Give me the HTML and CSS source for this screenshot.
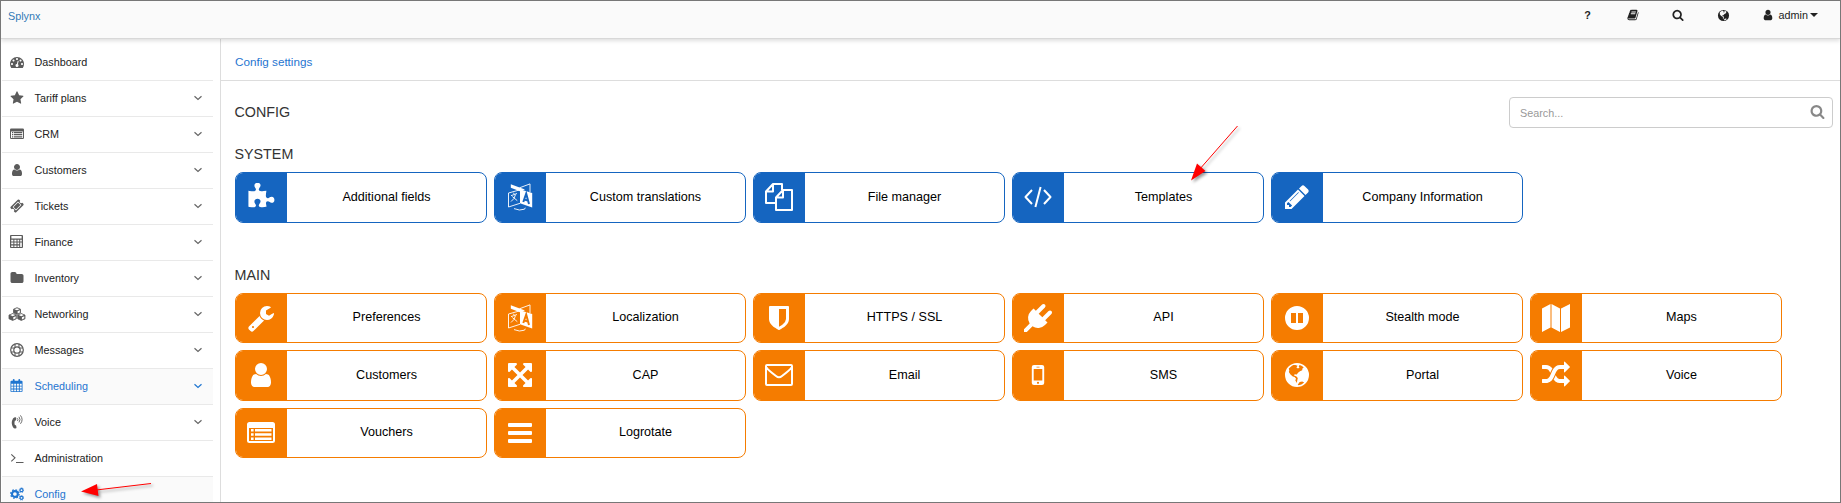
FILE: index.html
```html
<!DOCTYPE html>
<html lang="en">
<head>
<meta charset="utf-8">
<title>Splynx</title>
<link rel="stylesheet" href="styles.css">
</head>
<body>
<svg class="sprite" aria-hidden="true">
<symbol id="search" viewBox="0 0 1792 1792"><path d="M1216 832q0-185-131.500-316.500t-316.500-131.500-316.500 131.500-131.500 316.500 131.500 316.500 316.500 131.500 316.500-131.500 131.500-316.500zm512 832q0 52-38 90t-90 38q-54 0-90-38l-343-342q-179 124-399 124-143 0-273.500-55.500t-225-150-150-225-55.500-273.500 55.500-273.500 150-225 225-150 273.500-55.500 273.500 55.500 225 150 150 225 55.500 273.500q0 220-124 399l343 343q37 37 37 90z"/></symbol>
<symbol id="user" viewBox="0 0 1792 1792"><path d="M1536 1399q0 109-62.500 187t-150.500 78h-854q-88 0-150.500-78t-62.500-187q0-85 8.500-160.500t31.500-152 58.500-131 94-89 134.500-34.500q131 128 313 128t313-128q76 0 134.500 34.500t94 89 58.500 131 31.500 152 8.500 160.500zm-256-887q0 159-112.500 271.500t-271.500 112.500-271.500-112.500-112.500-271.500 112.500-271.500 271.500-112.500 271.500 112.500 112.500 271.500z"/></symbol>
<symbol id="star" viewBox="0 0 1792 1792"><path d="M1728 647q0 22-26 48l-363 354 86 500q1 7 1 20 0 21-10.500 35.500t-30.500 14.500q-19 0-40-12l-449-236-449 236q-22 12-40 12-21 0-31.500-14.500t-10.500-35.500q0-6 2-20l86-500-364-354q-25-27-25-48 0-37 56-46l502-73 225-455q19-41 49-41t49 41l225 455 502 73q56 9 56 46z"/></symbol>
<symbol id="gauge" viewBox="0 0 1792 1792"><path d="M384 1152q0-53-37.500-90.500t-90.500-37.500-90.500 37.500-37.500 90.500 37.500 90.500 90.500 37.500 90.500-37.500 37.500-90.500zm192-448q0-53-37.500-90.500t-90.500-37.500-90.500 37.500-37.500 90.500 37.500 90.500 90.500 37.500 90.500-37.500 37.500-90.500zm428 481l101-382q6-26-7.500-48.500t-38.500-29.500-48 6.500-30 39.500l-101 382q-60 5-107 43.500t-63 98.500q-20 77 20 146t117 89 146-20 89-117q16-60-6-117t-72-91zm660-33q0-53-37.500-90.500t-90.500-37.500-90.500 37.500-37.500 90.500 37.500 90.500 90.500 37.500 90.500-37.500 37.500-90.500zm-640-640q0-53-37.500-90.500t-90.500-37.500-90.500 37.500-37.500 90.500 37.500 90.500 90.500 37.500 90.500-37.500 37.500-90.500zm448 192q0-53-37.500-90.500t-90.500-37.500-90.500 37.500-37.500 90.500 37.500 90.500 90.500 37.500 90.500-37.500 37.500-90.500zm320 448q0 261-141 483-19 29-54 29h-1402q-35 0-54-29-141-221-141-483 0-182 71-348t191-286 286-191 348-71 348 71 286 191 191 286 71 348z"/></symbol>
<symbol id="list" viewBox="0 0 28 28"><path fill-rule="evenodd" d="M2.500 3h23A2.500 2.500 0 0 1 28 5.500v16a2.500 2.500 0 0 1-2.500 2.500h-23A2.500 2.500 0 0 1 0 21.500v-16A2.500 2.500 0 0 1 2.500 3zM2 9v13h24V9zM4 10h2.600v2.500H4zM8 10h16.500v2.500H8zM4 14.200h2.600v2.500H4zM8 14.200h16.500v2.500H8zM4 18.400h2.600v2.500H4zM8 18.400h16.500v2.500H8z"/></symbol>
<symbol id="ticket" viewBox="0 0 1792 1792"><path d="M1024 452l316 316-572 572-316-316zm-211 979l618-618q19-19 19-45t-19-45l-362-362q-18-18-45-18t-45 18l-618 618q-19 19-19 45t19 45l362 362q18 18 45 18t45-18zm889-637l-907 908q-37 37-90.500 37t-90.500-37l-126-126q56-56 56-136t-56-136-136-56-136 56l-125-126q-37-37-37-90.500t37-90.500l907-906q37-37 90.500-37t90.500 37l125 125q-56 56-56 136t56 136 136 56 136-56l126 125q37 37 37 90.500t-37 90.500z"/></symbol>
<symbol id="calc" viewBox="0 0 14 14"><path fill-rule="evenodd" d="M1 0h12q1 0 1 1v12q0 1-1 1H1q-1 0-1-1V1q0-1 1-1zM1.500 1.200v2.600h11V1.200zM1.300 5.200v1.800h2.300V5.200zM4.700 5.200v1.800H7V5.200zM8.100 5.200v1.800h1.800V5.200zM11 5.200v1.800h1.700V5.200zM1.300 8.200V10h2.300V8.200zM4.700 8.200V10H7V8.200zM8.100 8.200V10h1.800V8.200zM1.300 11.200v1.600h2.300v-1.600zM4.700 11.200v1.600H7v-1.600zM8.100 11.200v1.600h1.800v-1.600zM11 8.200v4.600h1.700V8.200z"/></symbol>
<symbol id="folder" viewBox="0 0 1792 1792"><path d="M1728 608v704q0 92-66 158t-158 66h-1216q-92 0-158-66t-66-158v-960q0-92 66-158t158-66h320q92 0 158 66t66 158v32h672q92 0 158 66t66 158z"/></symbol>
<symbol id="cubes" viewBox="0 0 18 14"><path stroke="currentColor" stroke-width=".8" stroke-linejoin="round" d="M9 .7l3.500 1.500v3.600L9 7.400 5.500 5.800V2.200zM4.700 6.600l3.600 1.500v3.700l-3.600 1.600-3.700-1.600V8.100zM13.300 6.600L17 8.100v3.700l-3.700 1.600-3.600-1.600V8.100z"/><path fill="#fff" d="M9 1.200l2.600 1L9 3.300l-2.600-1zM4.700 7.100l2.600 1-2.600 1.100-2.600-1.100zM13.300 7.100l2.600 1-2.600 1.100-2.600-1.100zM9.600 4.300l2.300-1v2.100l-2.300 1.100zM5.300 10.200l2.400-1v2.100l-2.400 1.200zM13.900 10.200l2.400-1v2.100l-2.400 1.200z"/></symbol>
<symbol id="ring" viewBox="0 0 14 14"><path fill="none" stroke="currentColor" stroke-width="1.200" d="M7 .7a6.300 6.300 0 1 0 0 12.600A6.300 6.300 0 1 0 7 .7zM7 3.800a3.200 3.200 0 1 0 0 6.400 3.200 3.200 0 1 0 0-6.400z"/><path fill="none" stroke="currentColor" stroke-width="1.100" d="M5 1v3.500M9 1v3.500M5 9.500V13M9 9.500V13M1 5h3.500M1 9h3.500M9.500 5H13M9.500 9H13"/></symbol>
<symbol id="calendar" viewBox="0 0 14 14"><path fill-rule="evenodd" d="M1.500 2H3V1q0-1 1-1t1 1v1h4V1q0-1 1-1t1 1v1h1.500q1 0 1 1v10q0 1-1 1h-11q-1 0-1-1V3q0-1 1-1zM1.400 5.200v2h2.200v-2zM4.500 5.200v2h2.100v-2zM7.500 5.200v2h2.100v-2zM10.500 5.200v2h2.100v-2zM1.400 8.200v2h2.200v-2zM4.500 8.200v2h2.100v-2zM7.500 8.200v2h2.100v-2zM10.500 8.200v2h2.100v-2zM1.400 11.200v1.900h2.200v-1.900zM4.500 11.200v1.900h2.100v-1.900zM7.500 11.200v1.900h2.100v-1.900zM10.500 11.200v1.900h2.100v-1.900z"/></symbol>
<symbol id="phone" viewBox="0 0 14 14"><path d="M4.900 2.200Q6.300 2 6.300 3l-.2 2q-.1.800-1.300.8-.7 2.200 0 4.200 1.300 0 1.400.8l.3 2q0 .9-1.500.8-1.100 0-2-1.400Q.5 8 3 3.600q.8-1.300 1.900-1.400z"/><path fill="none" stroke="currentColor" stroke-linecap="round" stroke-width=".9" d="M7.700 3.600q.8 1 0 2M9.200 2.100q1.900 2.500 0 5M10.700.7q3 3.900 0 7.800"/></symbol>
<symbol id="terminal" viewBox="0 0 14 14"><path fill="none" stroke="currentColor" stroke-width="1.100" d="M1.300 3.300l3.700 3.500-3.700 3.500M6 11.500h7.500"/></symbol>
<symbol id="cogs" viewBox="0 0 14 14"><g fill="none" stroke="currentColor"><circle cx="4.900" cy="7" r="2.900" stroke-width="2.100"/><circle cx="4.900" cy="7" r="4.200" stroke-width="1.300" stroke-dasharray="1.650 1.650"/><circle cx="11.500" cy="3.200" r="1.500" stroke-width="1.200"/><circle cx="11.500" cy="3.200" r="2.300" stroke-width=".9" stroke-dasharray=".9 .9"/><circle cx="11.500" cy="10.800" r="1.500" stroke-width="1.200"/><circle cx="11.500" cy="10.800" r="2.300" stroke-width=".9" stroke-dasharray=".9 .9"/></g></symbol>
<symbol id="book" viewBox="0 0 1792 1792"><path d="M1703 478q40 57 18 129l-275 906q-19 64-76.500 107.500t-122.500 43.500h-923q-77 0-148.500-53.500t-99.500-131.500q-24-67-2-127 0-4 3-27t4-37q1-8-3-21.500t-3-19.500q2-11 8-21t16.500-23.500 16.500-23.500q23-38 45-91.500t30-91.500q3-10 .5-30t-.5-28q3-11 17-28t17-23q21-36 42-92t25-90q1-9-2.500-32t.5-28q4-13 22-30.500t22-22.500q19-26 42.500-84.500t27.500-96.500q1-8-3-25.500t-2-26.500q2-8 9-18t18-23 17-21q8-12 16.500-30.500t15-35 16-36 19.500-32 26.500-23.500 36-11.500 47.500 5.500l-1 3q38-9 51-9h761q74 0 114 56t18 130l-274 906q-36 119-71.500 153.500t-128.500 34.500h-869q-27 0-38 15-11 16-1 43 24 70 144 70h923q29 0 56-15.500t35-41.500l300-987q7-22 5-57 38 15 59 43zm-1064 2q-4 13 2 22.500t20 9.500h608q13 0 25.500-9.500t16.500-22.500l21-64q4-13-2-22.500t-20-9.500h-608q-13 0-25.500 9.500t-16.500 22.500zm-83 256q-4 13 2 22.500t20 9.500h608q13 0 25.500-9.500t16.500-22.500l21-64q4-13-2-22.500t-20-9.500h-608q-13 0-25.500 9.500t-16.500 22.500z"/></symbol>
<symbol id="globe" viewBox="0 0 28 28"><path fill-rule="evenodd" d="M14 2a12 12 0 1 1 0 24 12 12 0 0 1 0-24zM7.500 6L5.800 7.500l.5 2.200L5.800 11l1.700 2.600 2.300 1.900 1.800.6 1.500 1.700-.8 1.500 1.500 2.600.4-2.200.6-2.600-1.600-1.800-2-.6.3-1.500 2.300.3 1.200-1.700 2-1.600 2.200-1 .2-1.700 1.300-1-1.700-1.600-2.300-1-1 1.300.8 1.400-1.500 1-1.600-1.200 1.200-1.600-2.200-.9-2 .2-1.400.6zM14.700 23.700l2-2.600 2.500-.6 2 1-2.800 2-2.800.8z"/></symbol>
<symbol id="down" viewBox="0 0 10 10"><path fill="none" stroke="currentColor" stroke-width="1.200" d="M1.500 3.200L5 6.500l3.500-3.300"/></symbol>
<symbol id="puzzle" viewBox="0 0 1792 1792"><path d="M1755 1082q0 81-44.500 135t-123.500 54q-41 0-77.500-17.500t-59-38-56.500-38-71-17.500q-110 0-110 124 0 39 16 115t15 115v5q-22 0-33 1-34 3-97.500 11.500t-115.500 13.500-98 5q-61 0-103-26.500t-42-83.500q0-37 17.500-71t38-56.500 38-59 17.500-77.500q0-79-54-123.500t-135-44.500q-84 0-143 45.500t-59 127.500q0 43 15 83t33.500 64.500 33.500 53 15 50.500q0 45-46 89-37 35-117 35-95 0-245-24-9-2-27.500-4t-27.500-4l-13-2q-1 0-3-1-2 0-2-1v-1024q2 1 17.500 3.500t34 5 21.500 3.500q150 24 245 24 80 0 117-35 46-44 46-89 0-22-15-50.500t-33.500-53-33.500-64.500-15-83q0-82 59-127.500t144-45.500q80 0 134 44.500t54 123.500q0 41-17.500 77.500t-38 59-38 56.500-17.500 71q0 57 42 83.500t103 26.500q64 0 180-15t163-17v2q-1 2-3.500 17.500t-5 34-3.500 21.500q-24 150-24 245 0 80 35 117 44 46 89 46 22 0 50.500-15t53-33.500 64.500-33.500 83-15q82 0 127.500 59t45.500 143z"/></symbol>
<symbol id="lang" viewBox="0 0 28 28"><path d="M14 6.300l12.200 3.800v14.400L14 20.300z"/><path d="M4.800 1.200L19 6.500l-5 1.800-9.200-3.500z"/><g fill="none" stroke="currentColor" stroke-width=".9"><path d="M14 6.800L2.500 10v14L14 20.300M13.500 4.800L24 .9v8.300"/><path d="M5 12.700l6-2.200M7.500 9.800l.8 1.500M9.500 11.500q-.8 4.500-4.500 7M6.300 13.500l5 4.200M8 25.600q5.500 2.500 10.500.6l.8-1.500"/></g><path class="cut" d="M17.300 19l2.900-8.300L23 21M18.300 16.500l3.700 1.100"/></symbol>
<symbol id="files" viewBox="0 0 28 28"><path fill="none" stroke="currentColor" stroke-width="2" stroke-linejoin="round" d="M11 20H1V8.500L8 1h9v6M8 1v7.500H1M18 7h9v20H11V14.500zM18 7v7.500h-7"/></symbol>
<symbol id="code" viewBox="0 0 28 28"><path fill="none" stroke="currentColor" stroke-width="2" stroke-linejoin="round" d="M8 7l-6.500 7L8 21M20 7l6.500 7-6.500 7M16.600 4l-5.200 20"/></symbol>
<symbol id="pencil" viewBox="0 0 1792 1792"><path d="M491 1536l91-91-235-235-91 91v107h128v128h107zm523-928q0-22-22-22-10 0-17 7l-542 542q-7 7-7 17 0 22 22 22 10 0 17-7l542-542q7-7 7-17zm-54-192l416 416-832 832h-416v-416zm683 96q0 53-37 90l-166 166-416-416 166-165q36-38 90-38 53 0 91 38l235 234q37 39 37 91z"/></symbol>
<symbol id="wrench" viewBox="0 0 1792 1792"><path d="M448 1472q0-26-19-45t-45-19-45 19-19 45 19 45 45 19 45-19 19-45zm644-420l-682 682q-37 37-90 37-52 0-91-37l-106-108q-38-36-38-90 0-53 38-91l681-681q39 98 114.500 173.500t173.500 114.500zm634-435q0 39-23 106-47 134-164.500 217.500t-258.500 83.500q-185 0-316.500-131.500t-131.500-316.500 131.500-316.500 316.500-131.500q58 0 121.500 16.500t107.500 46.500q16 11 16 28t-16 28l-293 169v224l193 107q5-3 79-48.500t135.500-81 70.500-35.500q15 0 23.500 10t8.500 25z"/></symbol>
<symbol id="shield" viewBox="0 0 1792 1792"><path d="M1344 960v-640h-448v1137q119-63 213-137 235-184 235-360zm192-768v768q0 86-33.500 170.500t-83 150-118 127.500-126.500 103-121 77.500-89.500 49.500-42.500 20q-12 6-26 6t-26-6q-16-7-42.500-20t-89.500-49.500-121-77.500-126.500-103-118-127.500-83-150-33.500-170.500v-768q0-26 19-45t45-19h1152q26 0 45 19t19 45z"/></symbol>
<symbol id="plug" viewBox="0 0 1792 1792"><path d="M1755 453q37 38 37 90.500t-37 90.500l-401 400 150 150-160 160q-163 163-389.500 186.500t-411.500-100.500l-362 362h-181v-181l362-362q-124-185-100.500-411.500t186.500-389.500l160-160 150 150 400-401q38-37 91-37t90 37 37 90.500-37 90.500l-400 401 234 234 401-400q38-37 91-37t90 37z"/></symbol>
<symbol id="pause" viewBox="0 0 28 28"><path fill-rule="evenodd" d="M14 2a12 12 0 1 1 0 24 12 12 0 0 1 0-24zM8 9v10h5V9zM15 9v10h5V9z"/></symbol>
<symbol id="map" viewBox="0 0 28 28"><path d="M0 4.500L8.500 0v23.500L0 28zM9.500 0l8.500 4.500V28l-8.500-4.500zM19 4.500L28 0v23.500L19 28z"/></symbol>
<symbol id="expand" viewBox="0 0 1792 1792"><path d="M1411 541l-355 355 355 355 144-144q29-31 70-14 39 17 39 59v448q0 26-19 45t-45 19h-448q-42 0-59-40-17-39 14-69l144-144-355-355-355 355 144 144q31 30 14 69-17 40-59 40h-448q-26 0-45-19t-19-45v-448q0-42 40-59 39-17 69 14l144 144 355-355-355-355-144 144q-19 19-45 19-12 0-24-5-40-17-40-59v-448q0-26 19-45t45-19h448q42 0 59 40 17 39-14 69l-144 144 355 355 355-355-144-144q-31-30-14-69 17-40 59-40h448q26 0 45 19t19 45v448q0 42-39 59-13 5-25 5-26 0-45-19z"/></symbol>
<symbol id="mail" viewBox="0 0 28 28"><path fill="none" stroke="currentColor" stroke-width="2" stroke-linejoin="round" d="M2 4h24q1 0 1 1v18q0 1-1 1H2q-1 0-1-1V5q0-1 1-1zM1.500 6.500Q3 9 11 15q3 2.600 6 0Q25 9 26.500 6.500"/></symbol>
<symbol id="mobile" viewBox="0 0 28 28"><path fill-rule="evenodd" d="M10 4h8q2.200 0 2.200 2v16q0 2-2.200 2h-8q-2.200 0-2.200-2V6q0-2 2.200-2zM9.700 8v11.500h8.600V8zM12.500 5.700v.7h3v-.7zM14 20.700a1.100 1.100 0 1 0 0 2.200 1.100 1.100 0 1 0 0-2.200z"/></symbol>
<symbol id="random" viewBox="0 0 1792 1792"><path d="M666 481q-60 92-137 273-22-45-37-72.500t-40.500-63.500-51-56.500-63-35-81.500-14.500h-224q-14 0-23-9t-9-23v-192q0-14 9-23t23-9h224q250 0 410 225zm1126 799q0 14-9 23l-320 320q-9 9-23 9-13 0-22.500-9.500t-9.500-22.500v-192q-32 0-85 .5t-81 1-73-1-71-5-64-10.500-63-18.500-58-28.500-59-40-55-53.500-56-69.500q59-93 136-273 22 45 37 72.500t40.500 63.500 51 56.500 63 35 81.500 14.500h256v-192q0-14 9-23t23-9q12 0 24 10l319 319q9 9 9 23zm0-896q0 14-9 23l-320 320q-9 9-23 9-13 0-22.500-9.500t-9.500-22.500v-192h-256q-48 0-87 15t-69 45-51 61.500-45 77.500q-32 62-78 171-29 66-49.500 111t-54 105-64 100-74 83-90 68.500-106.500 42-128 16.500h-224q-14 0-23-9t-9-23v-192q0-14 9-23t23-9h224q48 0 87-15t69-45 51-61.500 45-77.500q32-62 78-171 29-66 49.500-111t54-105 64-100 74-83 90-68.500 106.500-42 128-16.500h256v-192q0-14 9-23t23-9q12 0 24 10l319 319q9 9 9 23z"/></symbol>
<symbol id="bars" viewBox="0 0 28 28"><path d="M3 4h22q1 0 1 1v2q0 1-1 1H3q-1 0-1-1V5q0-1 1-1zM3 12h22q1 0 1 1v2q0 1-1 1H3q-1 0-1-1v-2q0-1 1-1zM3 20h22q1 0 1 1v2q0 1-1 1H3q-1 0-1-1v-2q0-1 1-1z"/></symbol>
</svg>
<div class="app">
<header class="topbar">
  <a class="brand">Splynx</a>
  <nav class="tools">
    <span class="tool help">?</span>
    <svg class="tool"><use href="#book"/></svg>
    <svg class="tool"><use href="#search"/></svg>
    <svg class="tool world"><use href="#globe"/></svg>
    <span class="account"><svg class="tool"><use href="#user"/></svg><span>admin</span><i class="caret"></i></span>
  </nav>
</header>
<div class="body">
<aside class="sidebar">
  <a class="item"><svg class="ico"><use href="#gauge"/></svg><span>Dashboard</span></a>
  <a class="item"><svg class="ico"><use href="#star"/></svg><span>Tariff plans</span><svg class="chev"><use href="#down"/></svg></a>
  <a class="item"><svg class="ico"><use href="#list"/></svg><span>CRM</span><svg class="chev"><use href="#down"/></svg></a>
  <a class="item"><svg class="ico"><use href="#user"/></svg><span>Customers</span><svg class="chev"><use href="#down"/></svg></a>
  <a class="item"><svg class="ico"><use href="#ticket"/></svg><span>Tickets</span><svg class="chev"><use href="#down"/></svg></a>
  <a class="item"><svg class="ico small"><use href="#calc"/></svg><span>Finance</span><svg class="chev"><use href="#down"/></svg></a>
  <a class="item"><svg class="ico"><use href="#folder"/></svg><span>Inventory</span><svg class="chev"><use href="#down"/></svg></a>
  <a class="item"><svg class="ico wide"><use href="#cubes"/></svg><span>Networking</span><svg class="chev"><use href="#down"/></svg></a>
  <a class="item"><svg class="ico"><use href="#ring"/></svg><span>Messages</span><svg class="chev"><use href="#down"/></svg></a>
  <a class="item active"><svg class="ico small"><use href="#calendar"/></svg><span>Scheduling</span><svg class="chev"><use href="#down"/></svg></a>
  <a class="item"><svg class="ico"><use href="#phone"/></svg><span>Voice</span><svg class="chev"><use href="#down"/></svg></a>
  <a class="item"><svg class="ico"><use href="#terminal"/></svg><span>Administration</span></a>
  <a class="item active"><svg class="ico"><use href="#cogs"/></svg><span>Config</span></a>
</aside>
<main class="main">
  <div class="crumbs"><a>Config settings</a></div>
  <div class="content">
    <div class="head"><h1>CONFIG</h1><div class="search"><span>Search...</span><svg><use href="#search"/></svg></div></div>
    <h2>SYSTEM</h2>
    <section class="grid blue">
      <a class="card"><span class="pic"><svg><use href="#puzzle"/></svg></span><span class="name">Additional fields</span></a>
      <a class="card"><span class="pic"><svg><use href="#lang"/></svg></span><span class="name">Custom translations</span></a>
      <a class="card"><span class="pic"><svg><use href="#files"/></svg></span><span class="name">File manager</span></a>
      <a class="card"><span class="pic"><svg><use href="#code"/></svg></span><span class="name">Templates</span></a>
      <a class="card"><span class="pic"><svg><use href="#pencil"/></svg></span><span class="name">Company Information</span></a>
    </section>
    <h2 class="second">MAIN</h2>
    <section class="grid orange">
      <a class="card"><span class="pic"><svg><use href="#wrench"/></svg></span><span class="name">Preferences</span></a>
      <a class="card"><span class="pic"><svg><use href="#lang"/></svg></span><span class="name">Localization</span></a>
      <a class="card"><span class="pic"><svg><use href="#shield"/></svg></span><span class="name">HTTPS / SSL</span></a>
      <a class="card"><span class="pic"><svg><use href="#plug"/></svg></span><span class="name">API</span></a>
      <a class="card"><span class="pic"><svg><use href="#pause"/></svg></span><span class="name">Stealth mode</span></a>
      <a class="card"><span class="pic"><svg><use href="#map"/></svg></span><span class="name">Maps</span></a>
      <a class="card"><span class="pic"><svg><use href="#user"/></svg></span><span class="name">Customers</span></a>
      <a class="card"><span class="pic"><svg><use href="#expand"/></svg></span><span class="name">CAP</span></a>
      <a class="card"><span class="pic"><svg><use href="#mail"/></svg></span><span class="name">Email</span></a>
      <a class="card"><span class="pic"><svg><use href="#mobile"/></svg></span><span class="name">SMS</span></a>
      <a class="card"><span class="pic"><svg><use href="#globe"/></svg></span><span class="name">Portal</span></a>
      <a class="card"><span class="pic"><svg><use href="#random"/></svg></span><span class="name">Voice</span></a>
      <a class="card"><span class="pic"><svg><use href="#list"/></svg></span><span class="name">Vouchers</span></a>
      <a class="card"><span class="pic"><svg><use href="#bars"/></svg></span><span class="name">Logrotate</span></a>
    </section>
  </div>
</main>
</div>
<svg class="arrows" viewBox="0 0 1841 503"><g fill="red" stroke="red"><path d="M1237.500 126L1199 170M151 483.500L96 490"/><path stroke="none" d="M1191 180.500l6-17 8.500 7.500zM81 491.500L97 484l1.500 12z"/></g></svg>
</div>
</body>
</html>
```
FILE: styles.css
```css
* { box-sizing: border-box; }
body { margin: 0; font-family: "Liberation Sans", Arial, sans-serif; font-size: 10.800px; color: #222; background: #fff; }
svg { display: block; fill: currentColor; }
.sprite { position: absolute; width: 0; height: 0; }
.app { position: relative; display: flex; flex-direction: column; height: 503px; border: 1px solid #777; overflow: hidden; }
.topbar { position: relative; flex: none; display: flex; justify-content: space-between; height: 38px; padding: 0 22px 0 7px; background: #fafafa; border-bottom: 1px solid #d8d8d8; box-shadow: 0 2px 4px rgba(0, 0, 0, .13); }
.brand { padding-top: 8px; line-height: 14px; color: #337ab7; }
.tools { display: flex; padding-top: 7px; height: 21px; align-items: center; }
.tool { width: 12px; height: 12px; margin-right: 33px; color: #222; }
.help { width: 12px; height: 14px; line-height: 14px; font-weight: bold; text-align: center; }
.world { width: 13px; height: 13px; margin-right: 32px; }
.account { display: flex; align-items: center; line-height: 14px; }
.account .tool { margin-right: 5px; }
.caret { margin-left: 2px; border: 4px solid transparent; border-top-color: #222; border-bottom: 0; }
.body { flex: 1; display: flex; min-height: 0; }
.sidebar { flex: none; width: 219px; padding: 6px 7px 0 1px; }
.item { display: flex; align-items: center; height: 36px; padding: 0 10px 1px 0; border-bottom: 1px solid #e9e9e9; }
.item.active { color: #1f75d0; background: #fafafa; }
.ico { flex: none; width: 14px; height: 14px; margin: 0 11px 1px 7.500px; color: #5b5b5b; }
.ico.small { width: 13px; height: 13px; margin-right: 12px; }
.ico.wide { width: 18px; margin: 0 9px 1px 5.500px; }
.item.active svg { color: #1f75d0; }
.chev { width: 10px; height: 10px; margin-left: auto; color: #666; }
.main { flex: 1; border-left: 1px solid #ddd; }
.crumbs { height: 42px; padding: 16px 0 0 14px; border-bottom: 1px solid #ddd; font-size: 11.700px; line-height: 14px; color: #1f75d0; }
.content { padding: 16px 7px 0 14px; }
.head { display: flex; justify-content: space-between; }
h1, h2 { margin: 0 0 0 -.5px; font-size: 14.300px; font-weight: normal; line-height: 18px; color: #333; }
h1 { padding-top: 6px; }
.search { display: flex; justify-content: space-between; width: 324px; height: 31px; padding: 0 7px 0 10px; border: 1px solid #ccc; border-radius: 4px; color: #999; line-height: 31px; }
.search svg { width: 15px; height: 15px; margin-top: 6px; color: #888; }
h2 { margin-top: 17px; }
.second { margin-top: 43px; }
.grid { display: grid; grid-template-columns: repeat(6, 252px); grid-auto-rows: 50.500px; column-gap: 7px; row-gap: 7px; margin-top: 9px; }
.blue { --tone: #1565c0; color: var(--tone); }
.orange { --tone: #f57c00; color: var(--tone); }
.card { display: flex; border: 1px solid; border-radius: 8px; overflow: hidden; }
.pic { flex: none; display: flex; align-items: center; justify-content: center; width: 51px; padding-right: 1px; background: currentColor; }
.pic svg { width: 28px; height: 28px; color: #fff; }
.name { flex: 1; display: flex; align-items: center; justify-content: center; padding-bottom: 1px; font-size: 12.600px; color: #000; }
.cut { fill: none; stroke: var(--tone); stroke-width: 2; }
.arrows { position: absolute; left: -1px; top: -1px; width: 1841px; height: 503px; filter: drop-shadow(2px 2px 1.500px rgba(0, 0, 0, .4)); }
```
